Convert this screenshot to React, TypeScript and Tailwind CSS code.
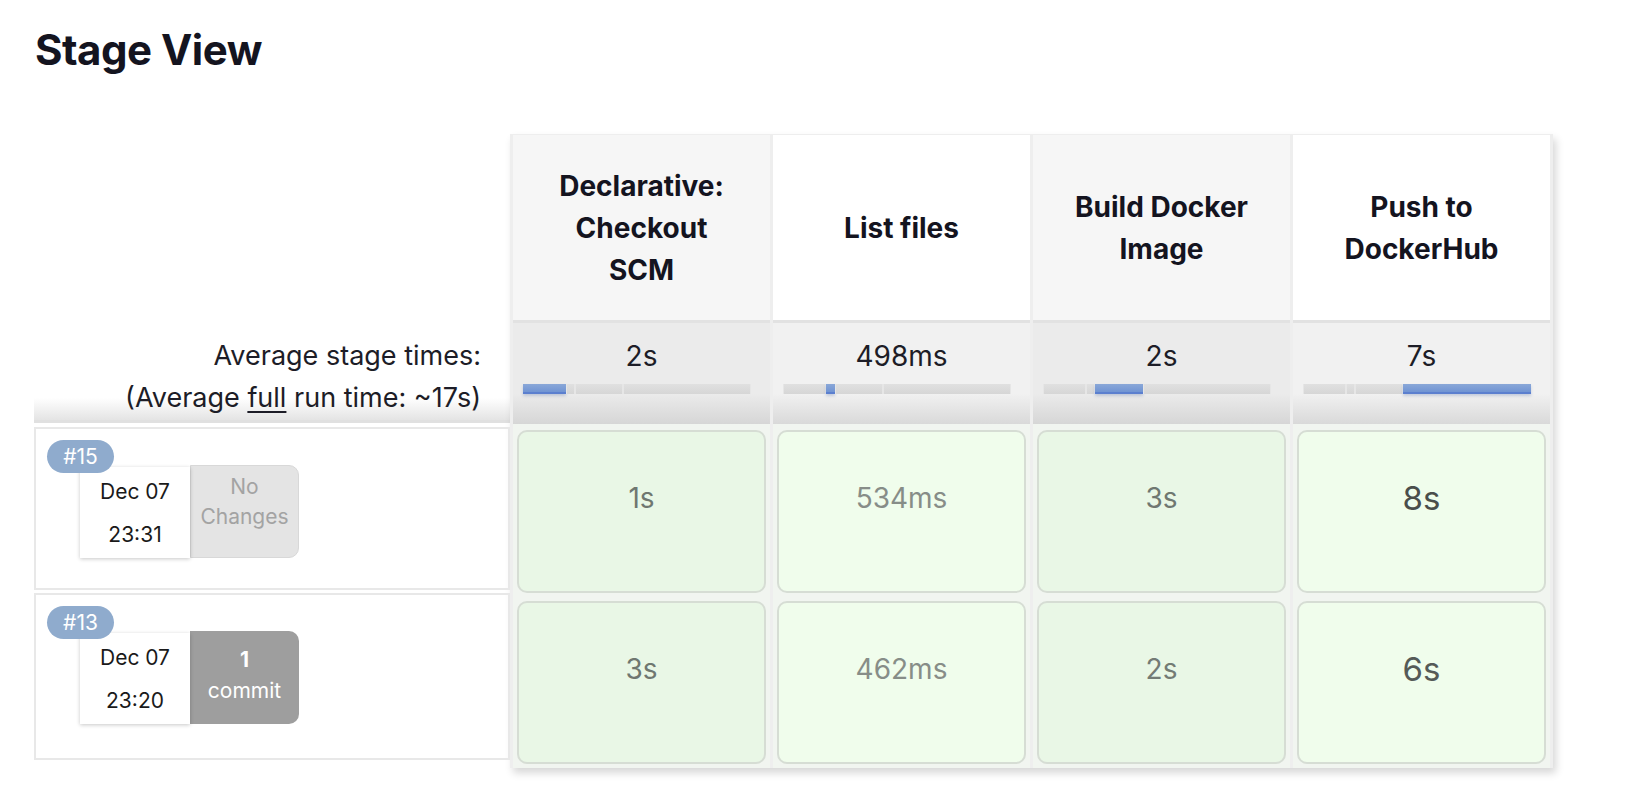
import React from "react";

type Stage = { name: string[]; avg: string; from: number; to: number; odd: boolean };

const stages: Stage[] = [
  { name: ["Declarative:", "Checkout", "SCM"], avg: "2s", from: 0, to: 19, odd: true },
  { name: ["List files"], avg: "498ms", from: 19, to: 23, odd: false },
  { name: ["Build Docker", "Image"], avg: "2s", from: 23, to: 44, odd: true },
  { name: ["Push to", "DockerHub"], avg: "7s", from: 44, to: 100, odd: false },
];

const bounds = [0, 19, 23, 44, 100];

type Cell = { t: string; big?: boolean; color: string };

const builds: {
  id: string;
  date: string;
  time: string;
  changes: "none" | "commit";
  cells: Cell[];
}[] = [
  {
    id: "#15",
    date: "Dec 07",
    time: "23:31",
    changes: "none",
    cells: [
      { t: "1s", color: "text-[#6f7771]" },
      { t: "534ms", color: "text-[#878d88]" },
      { t: "3s", color: "text-[#6f7771]" },
      { t: "8s", big: true, color: "text-[#4a4e4b]" },
    ],
  },
  {
    id: "#13",
    date: "Dec 07",
    time: "23:20",
    changes: "commit",
    cells: [
      { t: "3s", color: "text-[#6f7771]" },
      { t: "462ms", color: "text-[#878d88]" },
      { t: "2s", color: "text-[#737b75]" },
      { t: "6s", big: true, color: "text-[#555a57]" },
    ],
  },
];

function ProgressBar({ from, to }: { from: number; to: number }) {
  return (
    <div className="ml-[10px] mt-[11px] flex h-[10px] w-[228px]">
      {bounds.slice(0, -1).map((b, i) => {
        const active = b === from && bounds[i + 1] === to;
        return (
          <div
            key={b}
            style={{ width: `${bounds[i + 1] - b}%` }}
            className={
              active
                ? "h-full border-b-2 border-[#5b7fcf] bg-[linear-gradient(to_bottom,#8aa8d8,#7094d3)] shadow-[0_2px_3px_rgba(60,90,160,0.25)]"
                : "h-full border-x border-[#e6e6e6] bg-[linear-gradient(to_bottom,#e0e0e0,#d6d6d6)]"
            }
          />
        );
      })}
    </div>
  );
}

export default function App() {
  return (
    <div className="h-[808px] w-full bg-white font-['Inter',sans-serif] text-[#1d1d27]">
      <h1 className="pl-[35px] pt-[25px] text-[42px] font-bold leading-[50px] tracking-[-0.5px] text-[#14141f]">
        Stage View
      </h1>

      <div className="mt-[59px] flex pl-[34px]">
        {/* left: build history */}
        <div className="flex w-[476px] flex-col">
          <div className="h-[185px]" />
          <div className="h-[104px] border-b-[3px] border-[#e0e0e0] bg-[linear-gradient(to_bottom,#ffffff_78%,#e4e4e4)] pr-[29px] pt-[16px] text-right text-[27px] leading-[42px]">
            <div>Average stage times:</div>
            <div>
              (Average <span className="underline underline-offset-[4px]">full</span> run time: ~17s)
            </div>
          </div>
          {builds.map((b, i) => (
            <div
              key={b.id}
              className={`relative border-2 border-[#e8e8e8] ${i === 0 ? "mt-[4px] h-[163px]" : "mt-[3px] h-[167px]"}`}
            >
              <div className="absolute left-[11px] top-[11px] z-10 flex h-[33px] w-[67px] items-center justify-center rounded-full bg-[#8fabcd] text-[21px] text-white">
                {b.id}
              </div>
              <div className="ml-[44px] mt-[36px] flex">
                <div className="z-0 mt-[2px] flex h-[91px] w-[110px] flex-col items-center justify-center bg-white text-[21px] leading-[43px] text-[#1a1a1a] shadow-[0_1px_4px_rgba(0,0,0,0.22)]">
                  <div>{b.date}</div>
                  <div>{b.time}</div>
                </div>
                {b.changes === "none" ? (
                  <div className="flex h-[93px] w-[109px] flex-col items-center justify-center rounded-r-[10px] border border-[#d8d8d8] bg-[#e4e4e4] pb-[19px] text-[21px] leading-[30px] text-[#a3a3a3]">
                    <div>No</div>
                    <div>Changes</div>
                  </div>
                ) : (
                  <div className="flex h-[93px] w-[109px] flex-col items-center justify-center rounded-r-[10px] bg-[#9e9e9e] pb-[6px] text-[21px] leading-[31px] text-white">
                    <div className="font-bold">1</div>
                    <div>commit</div>
                  </div>
                )}
              </div>
            </div>
          ))}
        </div>

        {/* right: stage table */}
        <div className="flex self-start border-l-[3px] border-t border-[#eeeeee] shadow-[3px_5px_8px_rgba(0,0,0,0.16)]">
          {stages.map((s, ci) => (
            <div key={ci} className="flex w-[260px] flex-col border-r-[3px] border-[#eeeeee] bg-[#f1f5f0]">
              <div
                className={`flex h-[185px] flex-col items-center justify-center text-center text-[28px] font-bold leading-[42px] text-[#14141f] ${s.odd ? "bg-[#f6f6f6]" : "bg-white"}`}
              >
                {s.name.map((n) => (
                  <div key={n}>{n}</div>
                ))}
              </div>
              <div
                className={`h-[104px] border-t-[3px] border-[#e2e2e2] pt-[16px] ${s.odd ? "bg-[linear-gradient(to_bottom,#ebebeb_70%,#d6d6d6)]" : "bg-[linear-gradient(to_bottom,#f1f1f1_70%,#d9d9d9)]"}`}
              >
                <div className="text-center text-[28px] leading-[34px]">{s.avg}</div>
                <ProgressBar from={s.from} to={s.to} />
              </div>
              {builds.map((b) => {
                const c = b.cells[ci];
                return (
                  <div key={b.id} className="h-[171px] px-[4px] pt-[6px]">
                    <div
                      className={`h-[163px] rounded-[10px] border-2 border-[#d6ddd4] pt-[46px] text-center leading-[40px] ${s.odd ? "bg-[#e9f7e6]" : "bg-[#f0fdec]"} ${c.big ? "text-[33px]" : "text-[28px]"} ${c.color}`}
                    >
                      {c.t}
                    </div>
                  </div>
                );
              })}
              <div className="h-[2px]" />
            </div>
          ))}
        </div>
      </div>
    </div>
  );
}
